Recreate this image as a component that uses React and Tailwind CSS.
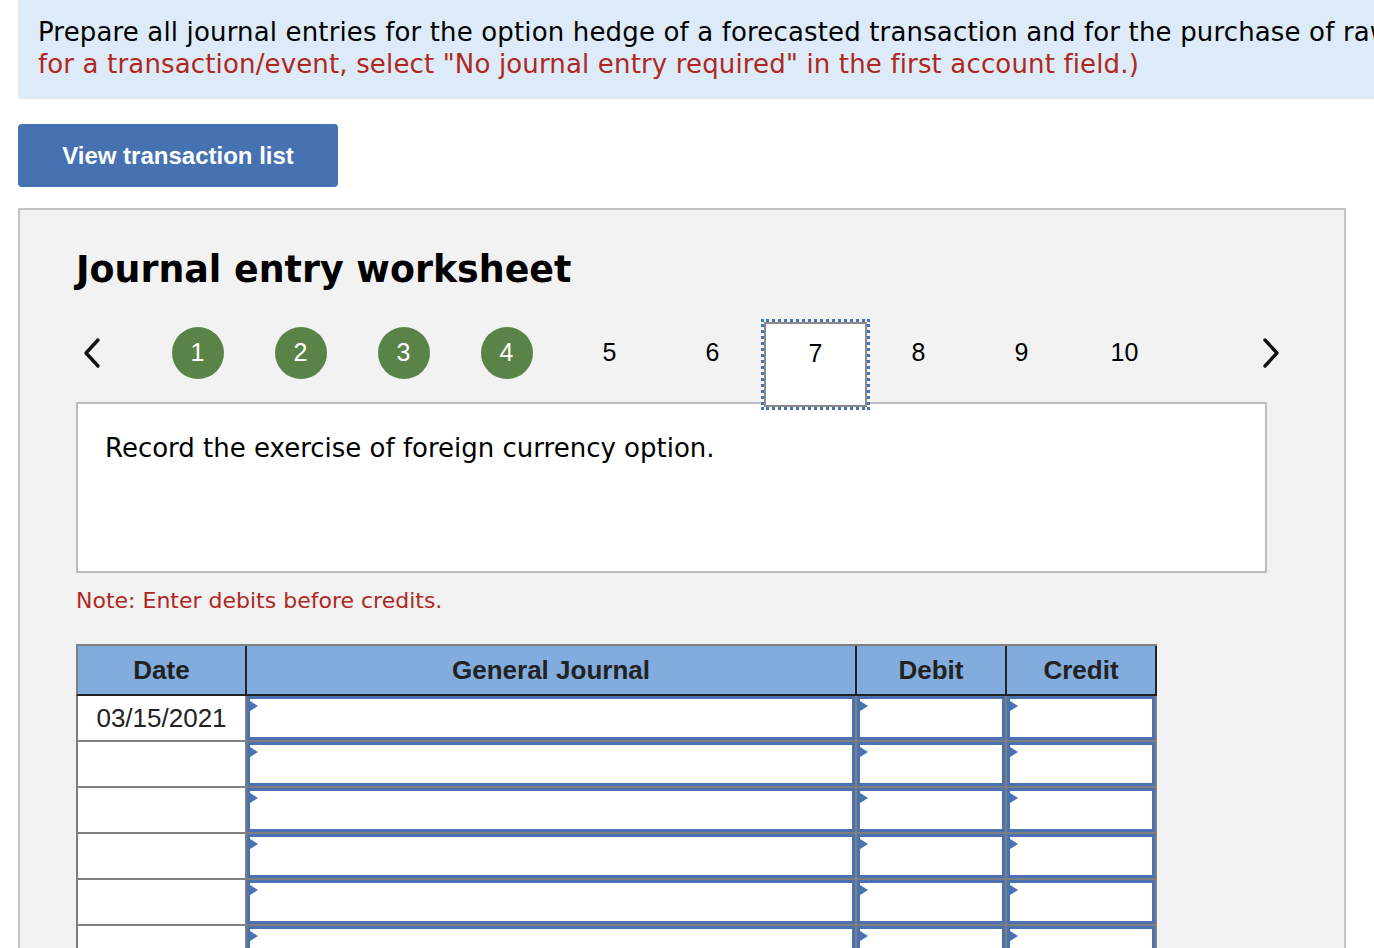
import React from "react";

const BLUE = "#4a72b0";

function Chevron({ dir }) {
  return (
    <svg width="20" height="32" viewBox="0 0 20 32" fill="none">
      {dir === "left" ? (
        <polyline points="16,3 4,16 16,29" stroke="#111" strokeWidth="3.4" strokeLinecap="round" strokeLinejoin="round" />
      ) : (
        <polyline points="4,3 16,16 4,29" stroke="#111" strokeWidth="3.4" strokeLinecap="round" strokeLinejoin="round" />
      )}
    </svg>
  );
}

function Tri() {
  return (
    <svg className="absolute left-[-3px] top-0" width="11" height="14" viewBox="0 0 11 14">
      <polygon points="0,0 11,7 0,14" fill={BLUE} />
    </svg>
  );
}

function InputCell({ w }) {
  return (
    <div className={`${w} h-[46px] border-r-2 border-b-2 border-[#7f7f7f] bg-white`}>
      <div className="relative h-full w-full border-[3px] border-[#4a72b0] bg-white">
        <Tri />
      </div>
    </div>
  );
}

export default function App() {
  const tabs = [1, 2, 3, 4, 5, 6, 7, 8, 9, 10];
  const rows = [0, 1, 2, 3, 4, 5, 6, 7];
  return (
    <div className="h-[948px] w-[1374px] overflow-hidden bg-white">
      <div className="ml-[18px] w-[1600px] bg-[#ddebf8] pl-[20px] pt-[16px] pb-[19px] font-['DejaVu_Sans',sans-serif] text-[26px] leading-[32px] tracking-[0.15px]">
        <div className="whitespace-nowrap text-black">
          Prepare all journal entries for the option hedge of a forecasted transaction and for the purchase of raw materials.{" "}
          <span className="text-[#b0271e]">(If no entry is required</span>
        </div>
        <div className="whitespace-nowrap text-[#b0271e]">
          for a transaction/event, select "No journal entry required" in the first account field.)
        </div>
      </div>

      <div className="ml-[18px] mt-[25px] flex h-[63px] w-[320px] items-center justify-center rounded-[4px] bg-[#4672b1] font-['Liberation_Sans',sans-serif] text-[24px] font-bold text-white">
        View transaction list
      </div>

      <div className="ml-[18px] mt-[21px] w-[1328px] border-2 border-[#c4c4c4] bg-[#f2f2f2] pl-[56px] pt-[40px] pb-[40px]">
        <div className="h-[40px] font-['DejaVu_Sans',sans-serif] text-[36.4px] font-bold leading-[40px] text-black">
          Journal entry worksheet
        </div>

        <div className="mt-[32px] flex h-[80px] items-start font-['Liberation_Sans',sans-serif] text-[25px] text-black">
          <div className="flex h-[62px] w-[70px] items-center pl-[6px]">
            <Chevron dir="left" />
          </div>
          {tabs.map((t) =>
            t <= 4 ? (
              <div key={t} className="flex h-[62px] w-[103px] items-center justify-center">
                <div className="flex h-[52px] w-[52px] items-center justify-center rounded-full bg-[#5a8348] text-white">
                  {t}
                </div>
              </div>
            ) : t === 7 ? (
              <div
                key={t}
                className="relative z-10 flex h-[85px] w-[103px] flex-col items-center border-2 border-[#8a8a8a] bg-white outline-dotted outline-[3px] outline-offset-[0px] outline-[#4a72b0]"
              >
                <div className="flex h-[60px] items-center">{t}</div>
              </div>
            ) : (
              <div key={t} className="flex h-[62px] w-[103px] items-center justify-center">
                {t}
              </div>
            )
          )}
          <div className="ml-[85px] flex h-[62px] items-center">
            <Chevron dir="right" />
          </div>
        </div>

        <div className="h-[171px] w-[1191px] border-2 border-[#bdbdbd] bg-white pl-[27px] pt-[28px] font-['DejaVu_Sans',sans-serif] text-[26px] leading-[32px] text-black">
          Record the exercise of foreign currency option.
        </div>

        <div className="mt-[14px] font-['DejaVu_Sans',sans-serif] text-[22px] leading-[28px] text-[#b0271e]">
          Note: Enter debits before credits.
        </div>

        <div className="mt-[29px] w-[1081px] font-['Liberation_Sans',sans-serif]">
          <div className="flex border-t-2 border-[#7f7f7f] bg-[#82acdd] text-[26px] font-bold text-[#222]">
            <div className="flex h-[50px] w-[171px] items-center justify-center border-l-2 border-l-[#7f7f7f] border-r-2 border-r-[#222] border-b-2 border-b-[#222]">
              Date
            </div>
            <div className="flex h-[50px] w-[610px] items-center justify-center border-r-2 border-b-2 border-[#222]">
              General Journal
            </div>
            <div className="flex h-[50px] w-[150px] items-center justify-center border-r-2 border-b-2 border-[#222]">
              Debit
            </div>
            <div className="flex h-[50px] w-[150px] items-center justify-center border-r-2 border-b-2 border-[#222]">
              Credit
            </div>
          </div>
          {rows.map((r) => (
            <div key={r} className="flex">
              <div className="flex h-[46px] w-[171px] items-center justify-center border-l-2 border-r-2 border-b-2 border-[#7f7f7f] bg-white text-[26px] text-[#222]">
                {r === 0 ? "03/15/2021" : ""}
              </div>
              <InputCell w="w-[610px]" />
              <InputCell w="w-[150px]" />
              <InputCell w="w-[150px]" />
            </div>
          ))}
        </div>
      </div>
    </div>
  );
}
